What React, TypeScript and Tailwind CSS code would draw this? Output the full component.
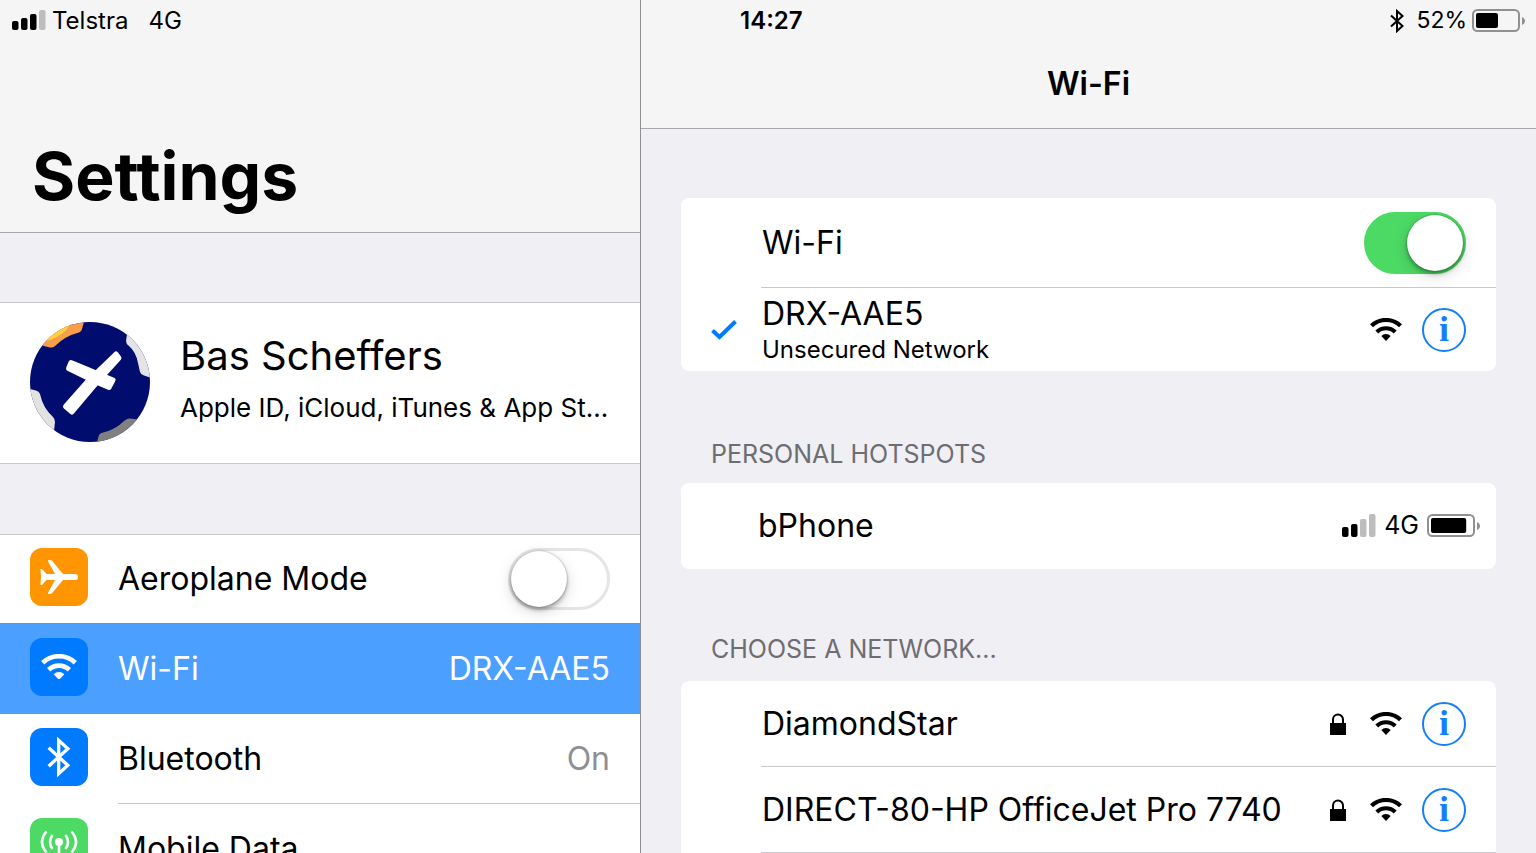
import type { ReactNode } from "react";
import clsx from "clsx";

// --- Icons ---

function SignalBars({ active, heights }: { active: number; heights: number[] }) {
  return (
    <svg width="34" height="24" viewBox="0 0 34 24" aria-hidden="true">
      {heights.map((h, i) => (
        <rect key={i} x={i * 9} y={23 - h} width="6.500" height={h} rx="2" fill={i < active ? "#000" : "#bdbdbd"} />
      ))}
    </svg>
  );
}

function Battery({ level }: { level: number }) {
  return (
    <svg width="53" height="24" viewBox="0 0 53 24" aria-hidden="true">
      <rect x="1" y="1" width="46" height="21" rx="4.5" fill="none" stroke="#909090" strokeWidth="2" />
      <rect x="4" y="4" width={40 * level} height="15" rx="2" fill="#000" />
      <path d="M50 8c4 1.5 4 6.500 0 8z" fill="#909090" />
    </svg>
  );
}

function WifiIcon({ className }: { className?: string }) {
  return (
    <svg viewBox="0 0 32 23" className={clsx("shrink-0", className)} aria-hidden="true">
      <g fill="none" stroke="currentColor" strokeWidth="4.200">
        <path d="M1.500 7.800a21 21 0 0 1 29 0" />
        <path d="M6.800 14a13.200 13.200 0 0 1 18.400 0" />
      </g>
      <path d="M11.300 18a6.500 6.500 0 0 1 9.400 0L16 23z" fill="currentColor" />
    </svg>
  );
}

function BluetoothIcon({ className }: { className?: string }) {
  return (
    <svg viewBox="0 0 14 24" className={className} aria-hidden="true">
      <path d="M1 6.500l11.500 10.500-5.500 5V2l5.500 5L1 17.500" fill="none" stroke="currentColor" strokeWidth="2" />
    </svg>
  );
}

function LockIcon() {
  return (
    <svg width="16" height="22" viewBox="0 0 16 22" className="shrink-0" aria-hidden="true">
      <rect y="10" width="16" height="12" />
      <path d="M3 11V6.500a5 5 0 0 1 10 0V11" fill="none" stroke="#000" strokeWidth="2" />
    </svg>
  );
}

function CheckIcon() {
  return (
    <svg width="26" height="20" viewBox="0 0 26 20" aria-hidden="true">
      <path d="M1.500 10.500l7 6.500L24.500 1.500" fill="none" stroke="#007aff" strokeWidth="4" />
    </svg>
  );
}

function PlaneIcon() {
  return (
    <svg width="38" height="34" viewBox="0 0 38 34" fill="#fff" aria-hidden="true">
      <path d="M.500 9h1.500l4.500 5H15L8 1.200Q7.800 0 9 0h1.500q1 0 1.500.800L23 14H35a3 3 0 0 1 0 6H23L12 33.200q-.500.800-1.500.800H9q-1.200 0-1-1.200L15 20H6.500L2 25H.500l.500-8z" />
    </svg>
  );
}

function AntennaIcon() {
  return (
    <svg width="38" height="38" viewBox="0 0 38 38" fill="none" stroke="#fff" strokeWidth="2.600" aria-hidden="true">
      <circle cx="19" cy="14" r="4" fill="#fff" stroke="none" />
      <path d="M19 14v24" />
      <path d="M12.500 7q-5 7 0 14M25.500 7q5 7 0 14" />
      <path d="M6.500 3.500q-9 10.500 0 21M31.500 3.500q9 10.500 0 21" />
    </svg>
  );
}

function Avatar() {
  return (
    <svg width="120" height="120" viewBox="0 0 120 120" className="shrink-0" role="img" aria-label="Profile picture">
      <clipPath id="avatar">
        <circle cx="60" cy="60" r="60" />
      </clipPath>
      <g clipPath="url(#avatar)">
        <rect width="120" height="120" fill="#000d6e" />
        <path d="M54 0L52 7q-.500 3-3 3.500Q35 14 25 24q-2 2-5 1.500L10 23V0z" fill="#f79d4b" />
        <path d="M39 4q-4 9-22 15L10 10 30 0z" fill="#ffcf40" />
        <path d="M97 12l-1 7q0 3 3 5 7 6 9 17l2 9q1 3 4 3.500l6 2V12z" fill="#e4e4e8" />
        <path d="M0 67l6 1.500q3 .500 4 3.500 3 14 13 23 2 2 2 5l-1 9H0z" fill="#e2e2e2" />
        <path d="M67 120l2-7q1-2 4-2.500Q85 108 94 99q3-3 6-2.500l8 1V120z" fill="#808080" />
      </g>
      <g fill="#fff" stroke="#fff" strokeWidth="5" strokeLinejoin="round">
        <path d="M86 32l3 4-20 22-27 32-6.500-5.500L58 59z" />
        <path d="M41 40.500l23 9.500 19 8-4 7.500-14-6-26.500-13z" />
      </g>
    </svg>
  );
}

// --- Controls ---

function Switch({ id, defaultChecked }: { id: string; defaultChecked?: boolean }) {
  return (
    <input
      id={id}
      type="checkbox"
      role="switch"
      defaultChecked={defaultChecked}
      className="flex h-[62px] w-[102px] shrink-0 appearance-none items-center rounded-full border-[3px] border-[#e5e5e5] bg-white before:size-14 before:rounded-full before:bg-white before:shadow-[0_3px_4px_rgba(0,0,0,0.3),0_5px_16px_rgba(0,0,0,0.15),0_0_2px_rgba(0,0,0,0.3)] checked:justify-end checked:border-[#4cd964] checked:bg-[#4cd964]"
    />
  );
}

function InfoButton({ name }: { name: string }) {
  return (
    <button
      type="button"
      aria-label={`More info about ${name}`}
      className="flex size-11 shrink-0 items-center justify-center rounded-full border-2 border-[#157efb] pb-0.5 font-['Liberation_Serif',serif] text-[36px] leading-none font-bold text-[#157efb]"
    >
      i
    </button>
  );
}

function IconTile({ className, children }: { className: string; children: ReactNode }) {
  return (
    <span className={clsx("flex size-[58px] shrink-0 items-center justify-center rounded-xl text-white", className)}>
      {children}
    </span>
  );
}

function GroupTitle({ className, children }: { className?: string; children: ReactNode }) {
  return (
    <h2 className={clsx("flex h-28 items-end px-[30px] text-[25px] leading-8 text-[#6d6d72]", className)}>{children}</h2>
  );
}

const networks = ["DiamondStar", "DIRECT-80-HP OfficeJet Pro 7740"];

// --- Left pane ---

function Sidebar() {
  return (
    <aside className="w-5/12 shrink-0 overflow-hidden">
      <header className="flex h-[233px] flex-col justify-between border-b border-[#a7a7ac] bg-[#f5f5f6]">
        <div className="flex h-[41px] items-center px-3 text-2xl">
          <span className="-mt-1">
            <SignalBars active={3} heights={[9, 12, 16, 20]} />
          </span>
          <span className="ml-1.5">Telstra</span>
          <span className="ml-5">4G</span>
        </div>
        <h1 className="px-8 pb-[18px] text-[66px] leading-[76px] font-bold">Settings</h1>
      </header>

      <a href="#account" className="mt-[69px] flex h-[162px] items-center gap-[30px] border-y border-[#c8c7cc] bg-white px-[30px] pb-0.5">
        <Avatar />
        <span className="min-w-0">
          <span className="block text-[40px] leading-[52px]">Bas Scheffers</span>
          <span className="block truncate text-[26px] leading-[52px]">Apple ID, iCloud, iTunes &amp; App St…</span>
        </span>
      </a>

      <ul className="mt-[70px] border-t border-[#c8c7cc] bg-white text-[32px]">
        <li className="flex h-[88px] items-center gap-[30px] px-[30px] pb-1">
          <IconTile className="bg-[#ff9500]">
            <PlaneIcon />
          </IconTile>
          <label htmlFor="aeroplane" className="mt-1 flex-1">
            Aeroplane Mode
          </label>
          <span className="mt-1">
            <Switch id="aeroplane" />
          </span>
        </li>
        <li className="bg-[#4a9fff] text-white">
          <a href="#wifi" className="flex h-[91px] items-center gap-[30px] px-[30px] pb-1">
            <IconTile className="bg-[#007aff]">
              <WifiIcon className="w-9" />
            </IconTile>
            <span className="mt-1 flex-1">Wi-Fi</span>
            <span className="mt-1">DRX-AAE5</span>
          </a>
        </li>
        <li>
          <a href="#bluetooth" className="flex h-[89px] items-center gap-[30px] px-[30px] pb-1">
            <IconTile className="bg-[#007aff]">
              <BluetoothIcon className="h-10" />
            </IconTile>
            <span className="mt-1 flex-1">Bluetooth</span>
            <span className="mt-1 text-[#8e8e93]">On</span>
          </a>
          <hr className="ml-[118px] border-[#c8c7cc]" />
        </li>
        <li>
          <a href="#mobile" className="flex h-[90px] items-center gap-[30px] px-[30px] pb-1">
            <IconTile className="bg-[#4cd964]">
              <AntennaIcon />
            </IconTile>
            <span className="mt-1 flex-1">Mobile Data</span>
          </a>
        </li>
      </ul>
    </aside>
  );
}

// --- Right pane ---

function WifiPanel() {
  return (
    <main className="min-w-0 flex-1 overflow-hidden border-l border-[#8e8e93]">
      <header className="h-[129px] border-b border-[#a7a7ac] bg-[#f5f5f6]">
        <div className="flex h-[41px] items-center pr-[11px] pl-[99px] text-2xl">
          <time className="flex-1 font-semibold">14:27</time>
          <BluetoothIcon className="h-6" />
          <span className="mr-[5px] ml-3 text-[23px]">52%</span>
          <Battery level={0.55} />
        </div>
        <h1 className="pt-[19px] text-center text-[32px] leading-[48px] font-semibold">Wi-Fi</h1>
      </header>

      <div className="px-10 pt-[69px] text-[32px]">
        <section className="rounded-lg bg-white">
          <div className="flex h-[89px] items-center pr-[30px] pl-[81px]">
            <label htmlFor="wifi-switch" className="flex-1">
              Wi-Fi
            </label>
            <Switch id="wifi-switch" defaultChecked />
          </div>
          <hr className="ml-20 border-[#c8c7cc]" />
          <div className="flex h-[83px] items-center pr-[30px] pl-[30px]">
            <span className="w-[51px]">
              <CheckIcon />
            </span>
            <div className="flex-1">
              <p className="leading-10">DRX-AAE5</p>
              <p className="text-2xl leading-8">Unsecured Network</p>
            </div>
            <WifiIcon className="mr-5 w-8" />
            <InfoButton name="DRX-AAE5" />
          </div>
        </section>

        <section>
          <GroupTitle className="pb-[13px]">PERSONAL HOTSPOTS</GroupTitle>
          <div className="flex h-[86px] items-center rounded-lg bg-white pr-4 pl-[77px]">
            <span className="flex-1">bPhone</span>
            <SignalBars active={2} heights={[10, 13, 18, 23]} />
            <span className="mx-2 text-[25px]">4G</span>
            <Battery level={0.88} />
          </div>
        </section>

        <section>
          <GroupTitle className="pb-4">CHOOSE A NETWORK...</GroupTitle>
          <ul className="rounded-lg bg-white pb-10">
            {networks.map((name) => (
              <li key={name}>
                <div className="flex h-[85px] items-center pr-[30px] pl-[81px]">
                  <span className="min-w-0 flex-1 truncate">{name}</span>
                  <LockIcon />
                  <WifiIcon className="mr-5 ml-6 w-8" />
                  <InfoButton name={name} />
                </div>
                <hr className="ml-20 border-[#c8c7cc]" />
              </li>
            ))}
          </ul>
        </section>
      </div>
    </main>
  );
}

export default function App() {
  return (
    <div className="flex h-screen overflow-hidden bg-[#efeff4] font-['Inter',sans-serif] text-black">
      <Sidebar />
      <WifiPanel />
    </div>
  );
}
